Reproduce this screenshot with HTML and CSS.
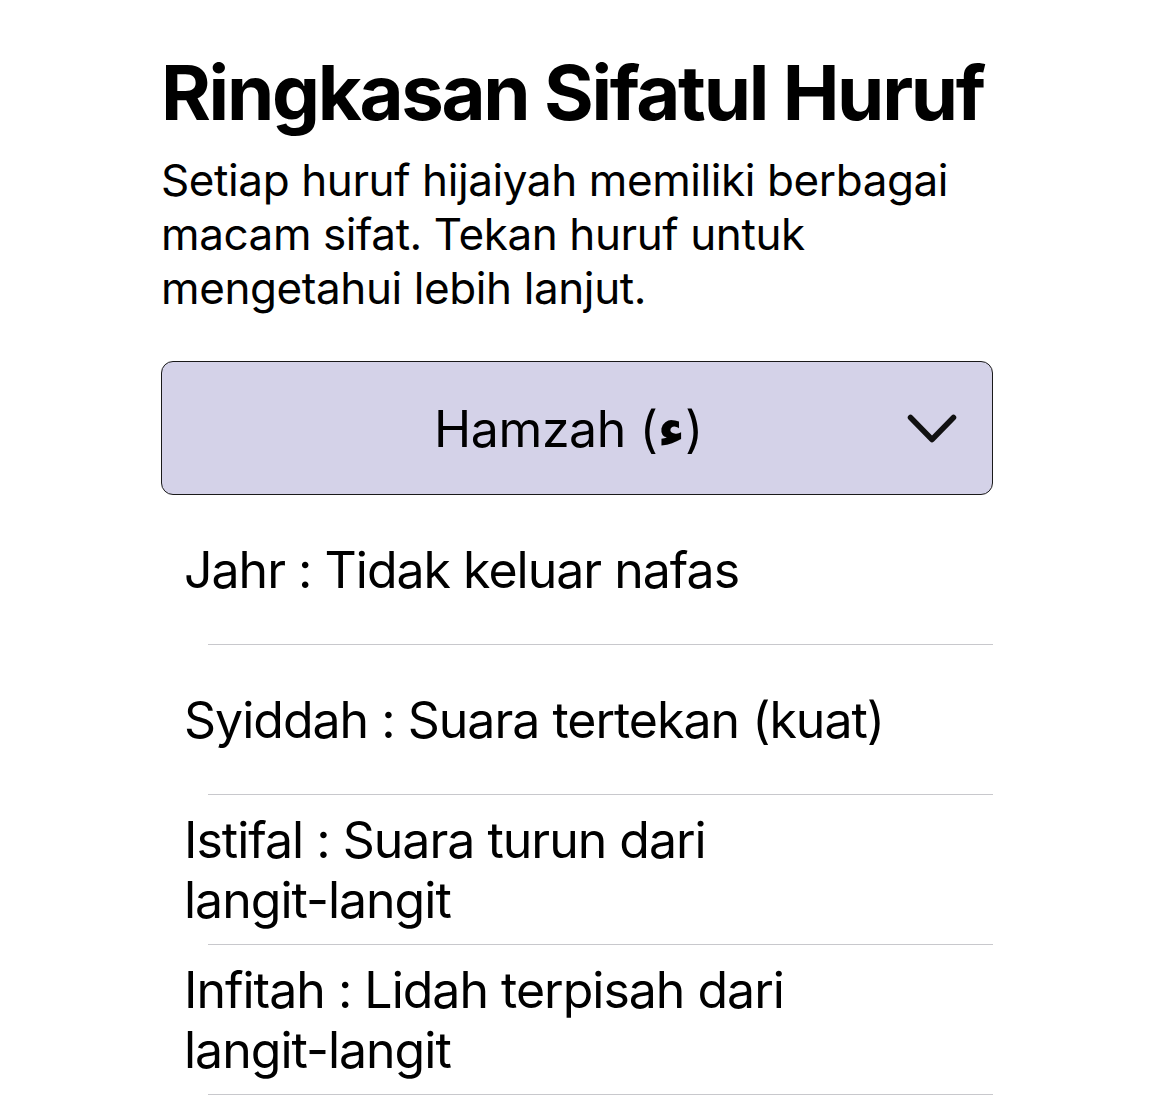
FILE: index.html
```html
<!DOCTYPE html>
<html lang="id">
<head>
<meta charset="utf-8">
<title>Ringkasan Sifatul Huruf</title>
<link rel="stylesheet" href="styles.css">
</head>
<body>
<main class="page">
  <h1 class="title">Ringkasan Sifatul Huruf</h1>
  <p class="intro">Setiap huruf hijaiyah memiliki berbagai macam sifat. Tekan huruf untuk mengetahui lebih lanjut.</p>
  <div class="picker">
    <span class="picker-label">Hamzah (<span class="ar">ء</span>)</span>
    <svg class="chevron" viewBox="0 0 50 29" width="50" height="29" aria-hidden="true">
      <path d="M3.5 3.5 L25 25.5 L46.5 3.5" fill="none" stroke="#111" stroke-width="5.5" stroke-linecap="round" stroke-linejoin="round"/>
    </svg>
  </div>
  <ul class="list">
    <li class="row"><span class="row-text">Jahr : Tidak keluar nafas</span></li>
    <li class="row"><span class="row-text">Syiddah : Suara tertekan (kuat)</span></li>
    <li class="row"><span class="row-text">Istifal : Suara turun dari<br>langit-langit</span></li>
    <li class="row"><span class="row-text">Infitah : Lidah terpisah dari<br>langit-langit</span></li>
  </ul>
</main>
</body>
</html>
```

FILE: styles.css
```css
html, body {
  margin: 0;
  padding: 0;
  background: #ffffff;
}

body {
  font-family: Inter, "Noto Sans", "DejaVu Sans", sans-serif;
  color: #000000;
}

.page {
  width: 832px;
  padding: 48px 0 0 161px;
  box-sizing: content-box;
}

.title {
  margin: 0;
  font-size: 76px;
  font-weight: 700;
  line-height: 88px;
  letter-spacing: -2.3px;
  white-space: nowrap;
}

.intro {
  margin: 17px 0 0;
  font-size: 44px;
  line-height: 54px;
  font-weight: 400;
  letter-spacing: -0.4px;
}

.picker {
  margin-top: 46px;
  height: 134px;
  box-sizing: border-box;
  border: 1.5px solid #1a1a1a;
  border-radius: 12px;
  background: #d4d2e8;
  display: flex;
  align-items: center;
  padding: 0 35px 0 0;
}

.picker-label {
  flex: 1;
  text-align: center;
  font-size: 50px;
  letter-spacing: -0.4px;
  padding-left: 68px;
}

.ar {
  font-family: "DejaVu Sans", sans-serif;
  font-weight: 700;
  font-size: 54px;
}

.chevron {
  width: 50px;
  height: 29px;
  display: block;
}

.list {
  list-style: none;
  margin: 0;
  padding: 0;
}

.row {
  height: 150px;
  box-sizing: border-box;
  display: flex;
  align-items: center;
  margin-left: 47px;
  border-bottom: 1px solid #c8c8cc;
}

.row-text {
  margin-left: -24px;
  font-size: 50px;
  line-height: 60px;
  letter-spacing: -1px;
}
```
